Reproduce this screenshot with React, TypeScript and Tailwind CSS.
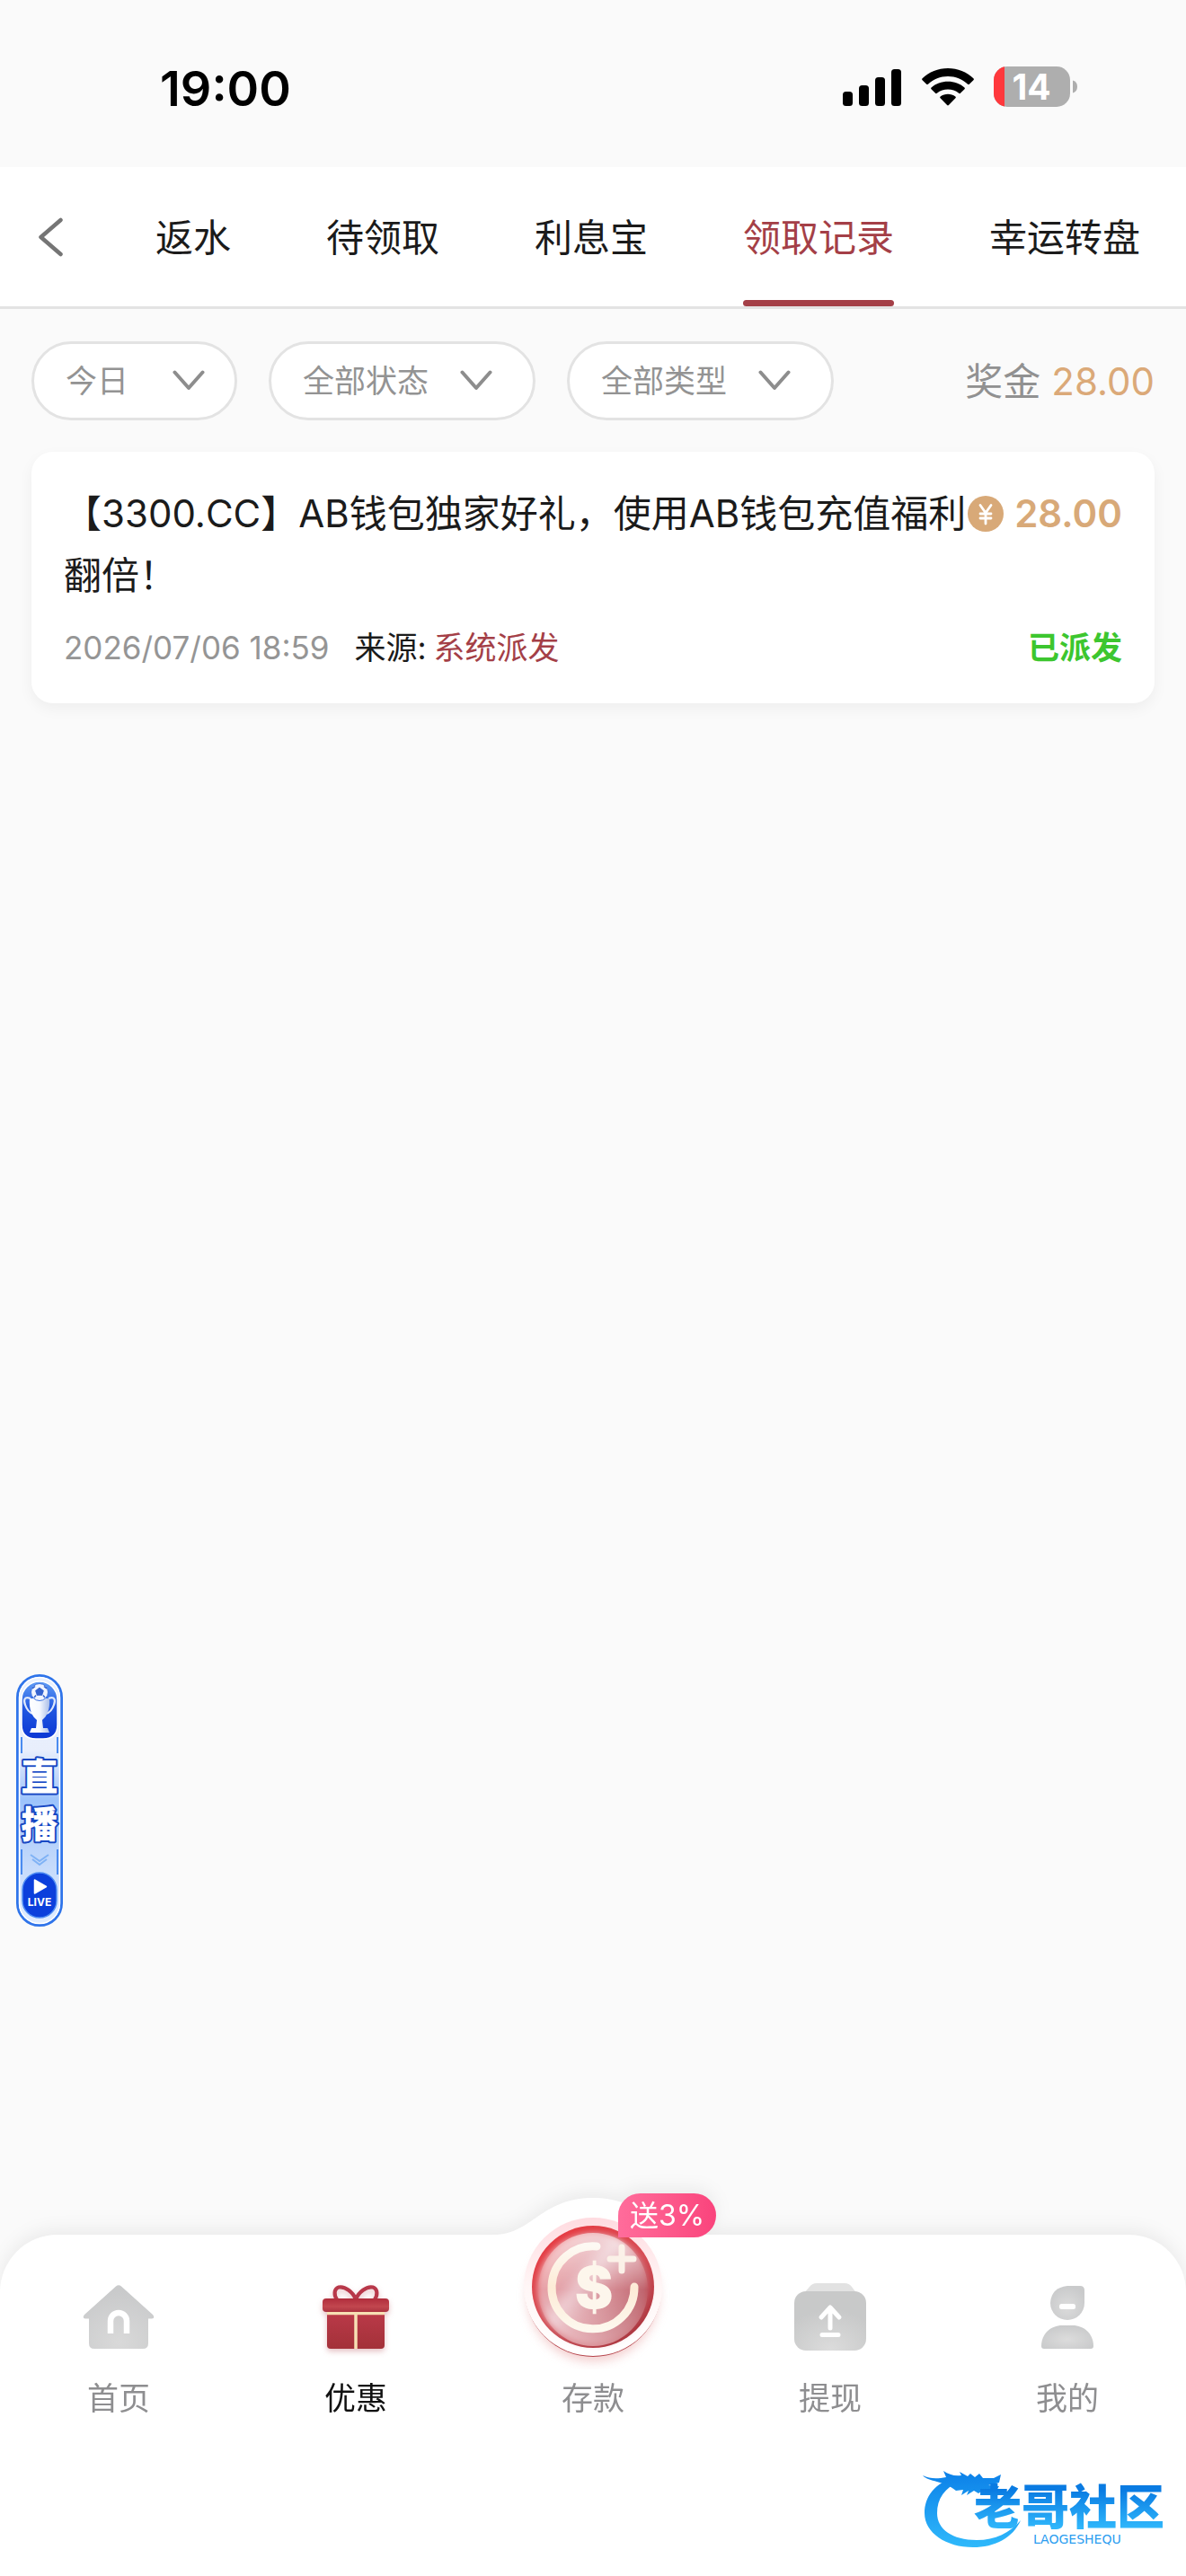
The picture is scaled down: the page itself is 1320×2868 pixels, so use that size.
import React from 'react';

const tabs = ['返水', '待领取', '利息宝', '领取记录', '幸运转盘'];

function StatusBar() {
  return (
    <div className="flex h-[186px] items-center justify-between bg-[#fafafa] pt-2 pr-[120px] pl-[178px]">
      <span className="pt-1 text-[54px] leading-none font-semibold text-black">19:00</span>
      <div className="flex items-center gap-[22px]">
        <svg className="h-[42px] w-[66px]" viewBox="0 0 66 42" aria-label="信号">
          <rect x="0" y="26" width="11" height="16" rx="3.5" />
          <rect x="18" y="19" width="11" height="23" rx="3.5" />
          <rect x="36" y="10" width="11" height="32" rx="3.5" />
          <rect x="54" y="1" width="11" height="41" rx="3.5" />
        </svg>
        <svg className="h-[42px] w-[58px]" viewBox="0 0 58 42" aria-label="无线网络">
          <path d="M0.6 13.2Q-.4 12.2.6 11.200C8 4 18 0 29 0s21 4 28.400 11.200q1 1 0 2l-4.600 4.500q-.8.8-1.700 0C45 12 37.500 9 29 9S13 12 6.900 17.700q-.9.8-1.700 0z" />
          <path d="M10.500 23.200q-.9-.9 0-1.800C15.500 17 22 14.700 29 14.700s13.500 2.300 18.500 6.700q.9.900 0 1.800l-4.600 4.600q-.8.800-1.700 0C37.500 25 33.500 23.600 29 23.600S20.500 25 16.800 27.800q-.9.800-1.700 0z" />
          <path d="M20.600 33.300q-1-.9 0-1.800C23 29.600 26 28.700 29 28.700s6 .9 8.400 2.800q1 .9 0 1.800l-7.500 7.800q-.9.900-1.800 0z" />
        </svg>
        <svg className="h-[46px] w-[94px] overflow-visible" viewBox="0 0 94 46" aria-label="电量 14%">
          <defs>
            <clipPath id="battery-shape"><rect x="0" y="0" width="85" height="45" rx="15" /></clipPath>
          </defs>
          <g clipPath="url(#battery-shape)">
            <rect width="85" height="45" fill="#aeaeae" />
            <rect width="12" height="45" fill="#ff383c" />
          </g>
          <path d="M88 15.500q5 1.500 5 7t-5 7z" fill="#aeaeae" />
          <text x="42" y="37" textAnchor="middle" fontSize="39" fontWeight="700" fill="#fff">14</text>
        </svg>
      </div>
    </div>
  );
}

function Header() {
  return (
    <header className="flex h-[158px] items-stretch border-b-[3px] border-[#e3e3e3] bg-white">
      <button type="button" aria-label="返回" className="flex min-w-0 flex-1 items-center pl-[42px]">
        <svg className="h-[44px] w-[28px]" viewBox="0 0 28 44" fill="none" stroke="#757575" strokeWidth="4.500" strokeLinecap="round" strokeLinejoin="round">
          <path d="M25.500 3 3.500 22l22 19" />
        </svg>
      </button>
      <nav className="flex gap-[106px] pr-[51px]">
        {tabs.map((tab) => {
          const active = tab === '领取记录';
          return (
            <a key={tab} href="#" aria-current={active ? 'page' : undefined} className="flex flex-col">
              <span className={active ? 'flex flex-1 items-center pt-2 text-[42px] text-[#a43f47]' : 'flex flex-1 items-center pt-2 text-[42px] text-[#1b1b1b]'}>{tab}</span>
              <span className={active ? 'h-[7px] rounded-full bg-[#a43f47]' : 'h-[7px]'} />
            </a>
          );
        })}
      </nav>
    </header>
  );
}

function Filter({ label, name, wide }: { label: string; name: string; wide?: boolean }) {
  return (
    <div className="relative">
      <select
        aria-label={name}
        className={
          wide
            ? 'h-[88px] w-[297px] appearance-none rounded-full border-[3px] border-[#e3e3e3] bg-white pl-[35px] text-[35px] text-[#939393]'
            : 'h-[88px] w-[229px] appearance-none rounded-full border-[3px] border-[#e3e3e3] bg-white pl-[35px] text-[35px] text-[#939393]'
        }
      >
        <option>{label}</option>
      </select>
      <svg
        className={wide ? 'pointer-events-none absolute top-8 right-12 h-6 w-9' : 'pointer-events-none absolute top-8 right-9 h-6 w-9'}
        viewBox="0 0 36 24"
        fill="none"
        stroke="#8d8d8d"
        strokeWidth="4"
        strokeLinecap="round"
        strokeLinejoin="round"
      >
        <path d="M2.500 2.500 18 20 33.500 2.500" />
      </svg>
    </div>
  );
}

function Record() {
  return (
    <article className="mx-[35px] mt-[35px] rounded-3xl bg-white px-9 pt-[34px] pb-7 shadow-[0_6px_16px_rgba(0,0,0,0.05)]">
      <div className="flex items-start justify-between">
        <h2 className="min-w-0 flex-1 text-[42px] leading-[69px] text-[#1b1b1b]">【3300.CC】AB钱包独家好礼，使用AB钱包充值福利翻倍！</h2>
        <div className="flex h-[69px] items-center gap-3 text-[#d8a978]">
          <svg className="h-10 w-10" viewBox="0 0 40 40" aria-hidden="true">
            <circle cx="20" cy="20" r="20" fill="#d8a978" />
            <path d="M14 10.500 20 19l6-8.500M20 19v12M14 20h12M14 25h12" fill="none" stroke="#fff" strokeWidth="2.800" strokeLinecap="round" strokeLinejoin="round" />
          </svg>
          <strong className="text-[42px] font-semibold">28.00</strong>
        </div>
      </div>
      <div className="mt-3 flex h-[68px] items-center text-[35px]">
        <time className="text-[#959595]">2026/07/06 18:59</time>
        <span className="ml-7 text-[#1b1b1b]">来源:</span>
        <span className="ml-2 text-[#a43f47]">系统派发</span>
        <strong className="ml-auto font-bold text-[#3dc62f]">已派发</strong>
      </div>
    </article>
  );
}

function LiveBadge() {
  return (
    <button type="button" aria-label="直播" className="absolute top-[1864px] left-[18px]">
      <svg className="h-[281px] w-[52px]" viewBox="0 0 52 281">
        <defs>
          <linearGradient id="live-bg" x1="0" y1="0" x2="0" y2="1">
            <stop offset="0" stopColor="#e9f1ff" />
            <stop offset=".3" stopColor="#e8eefc" />
            <stop offset=".5" stopColor="#9cc3fb" />
            <stop offset=".75" stopColor="#c3d9fb" />
            <stop offset="1" stopColor="#e3eeff" />
          </linearGradient>
          <linearGradient id="live-blue" x1="0" y1="0" x2="0" y2="1">
            <stop offset="0" stopColor="#5f9cf5" />
            <stop offset=".5" stopColor="#1f55e0" />
            <stop offset="1" stopColor="#0b36d4" />
          </linearGradient>
          <linearGradient id="live-cup" x1="0" x2="1">
            <stop offset="0" stopColor="#fff" />
            <stop offset=".5" stopColor="#f6f9ff" />
            <stop offset="1" stopColor="#a9bde8" />
          </linearGradient>
        </defs>
        <rect x="1.500" y="1.500" width="49" height="278" rx="24.500" fill="url(#live-bg)" stroke="#2f74ea" strokeWidth="3" />
        <rect x="3.500" y="3.500" width="45" height="274" rx="22.500" fill="none" stroke="#fff" strokeWidth="1.500" />
        <path d="M6 28a20 20 0 0 1 40 0v28q0 16-16 16h-8Q6 72 6 56z" fill="url(#live-blue)" stroke="#fff" strokeWidth="1.500" />
        <path d="M6 70v18M46 70v18M6 195v28M46 195v28" stroke="#4a8bf0" strokeWidth="2" />
        <g fill="none" stroke="#dfe8fb" strokeWidth="2.200">
          <path d="M16 27c-7-3-8 2-6 7 2 6 5 9 9 10M36 27c7-3 8 2 6 7-2 6-5 9-9 10" />
        </g>
        <path d="M15 27h22c1 13-3 20-8 24l1 9h5l2 5H15l2-5h5l1-9c-5-4-9-11-8-24z" fill="url(#live-cup)" />
        <circle cx="26" cy="20" r="9.500" fill="#f1f5ff" stroke="#3f74e0" strokeWidth="1" />
        <path d="M26 15.500l4 3-1.500 4.500h-5L22 18.500zM18 16l3-2.500M34 16l-3-2.500M20 26l2-2.500M32 26l-2-2.500" fill="#3563cf" stroke="#3563cf" strokeWidth="1.500" />
        <g fontSize="41" fontWeight="900" textAnchor="middle" fill="#fff" stroke="#1748c4" strokeWidth="4" strokeLinejoin="round" paintOrder="stroke">
          <text x="26" y="129">直</text>
          <text x="26" y="182">播</text>
        </g>
        <path d="m16 201 10 7 10-7M18 206l8 6 8-6" fill="none" stroke="#7fb2f5" strokeWidth="2" />
        <rect x="7" y="221" width="38" height="50" rx="19" fill="#0b3fdc" stroke="#4d8cf3" strokeWidth="1.500" />
        <path d="m20.500 229 13 7.500-13 7.500z" fill="#fff" stroke="#fff" strokeWidth="1.500" strokeLinejoin="round" />
        <text x="26" y="258" textAnchor="middle" fontSize="12" fontWeight="700" fill="#fff">LIVE</text>
      </svg>
    </button>
  );
}

function HomeIcon() {
  return (
    <svg className="h-[72px] w-20" viewBox="0 0 80 72" aria-hidden="true">
      <defs>
        <radialGradient id="home-fill" cx=".5" cy=".9" r=".8">
          <stop offset="0" stopColor="#d9d9d9" />
          <stop offset="1" stopColor="#c9cacb" />
        </radialGradient>
      </defs>
      <path d="M37 1.500q3-2.500 6 0L78 33q3 4-1 4.500h-4V65q0 6-6 6H13q-6 0-6-6V37.500H3Q-1 37 2 33z" fill="url(#home-fill)" />
      <path d="M31 54V40a9 9 0 0 1 18 0v14" fill="none" stroke="#fff" strokeWidth="6.500" />
    </svg>
  );
}

function GiftIcon() {
  return (
    <svg className="h-[72px] w-20 overflow-visible drop-shadow-[0_3px_3px_rgba(170,50,60,0.3)]" viewBox="0 0 80 72" aria-hidden="true">
      <defs>
        <linearGradient id="gift-lid" x1="0" y1="0" x2="0" y2="1">
          <stop offset="0" stopColor="#b02d3c" />
          <stop offset=".6" stopColor="#c2474f" />
          <stop offset="1" stopColor="#ab3340" />
        </linearGradient>
        <linearGradient id="gift-box" x1="0" y1="0" x2="0" y2="1">
          <stop offset="0" stopColor="#bb3a49" />
          <stop offset="1" stopColor="#a33139" />
        </linearGradient>
      </defs>
      <path d="M40 16C37 8 28 1 21 2.500c-6 2-5 10-2 13.500M40 16C43 8 52 1 59 2.500c6 2 5 10 2 13.500" fill="none" stroke="#b8384a" strokeWidth="4.200" />
      <path d="M8 30h64v37q0 4-4 4H12q-4 0-4-4z" fill="url(#gift-box)" />
      <path d="M8 31.500h64M40 31v40" stroke="#f7e0b4" strokeWidth="3.500" />
      <rect x="3" y="15" width="74" height="15" rx="4" fill="url(#gift-lid)" />
    </svg>
  );
}

function WithdrawIcon() {
  return (
    <svg className="h-[76px] w-20" viewBox="0 0 80 76" aria-hidden="true">
      <defs>
        <radialGradient id="withdraw-fill" cx=".5" cy="1" r=".7">
          <stop offset="0" stopColor="#dcdcdc" />
          <stop offset="1" stopColor="#c8c9c9" />
        </radialGradient>
      </defs>
      <path d="M10 12 17 4q3-4 8-4h31q5 0 8 4l6 8z" fill="#e2e2e2" />
      <rect x="0" y="9" width="80" height="66" rx="13" fill="url(#withdraw-fill)" />
      <path d="M40 28v22M30 38l10-11 10 11M31 57.500h18" fill="none" stroke="#fff" strokeWidth="5" strokeLinecap="round" strokeLinejoin="round" />
    </svg>
  );
}

function ProfileIcon() {
  return (
    <svg className="h-[72px] w-[60px]" viewBox="0 0 60 72" aria-hidden="true">
      <defs>
        <radialGradient id="profile-fill" cx=".5" cy=".6" r=".6">
          <stop offset="0" stopColor="#dcdcdc" />
          <stop offset="1" stopColor="#c9cacb" />
        </radialGradient>
      </defs>
      <path d="M30 1h14q5 0 5 5v14a19 19 0 0 1-38 0Q12 3 30 1z" fill="url(#profile-fill)" />
      <rect x="21" y="21" width="18" height="6" rx="2.500" fill="#fff" />
      <path d="M1 68C1 54 12 45 24 45h12c12 0 23 9 23 23q0 3-3 3H4q-3 0-3-3z" fill="url(#profile-fill)" />
    </svg>
  );
}

function DepositIcon() {
  return (
    <svg className="h-[180px] w-[180px]" viewBox="0 0 180 180" aria-hidden="true">
      <defs>
        <linearGradient id="coin-ring" x1="0" y1="0" x2="0" y2="1">
          <stop offset="0" stopColor="#ffdbe0" />
          <stop offset=".5" stopColor="#fff6f6" />
          <stop offset="1" stopColor="#fff" />
        </linearGradient>
        <linearGradient id="coin-edge" x1=".2" y1="0" x2=".8" y2="1">
          <stop offset="0" stopColor="#e8383f" />
          <stop offset=".5" stopColor="#d64c54" />
          <stop offset="1" stopColor="#a52f38" />
        </linearGradient>
        <linearGradient id="coin-face" x1=".1" y1=".1" x2=".95" y2=".8">
          <stop offset="0" stopColor="#f2a5a8" />
          <stop offset=".3" stopColor="#e2a0a7" />
          <stop offset=".42" stopColor="#ebc5cb" />
          <stop offset=".6" stopColor="#d8929a" />
          <stop offset="1" stopColor="#b04650" />
        </linearGradient>
        <linearGradient id="coin-gloss" x1="0" y1="0" x2="0" y2="1">
          <stop offset="0" stopColor="#fff" stopOpacity=".55" />
          <stop offset=".5" stopColor="#fff" stopOpacity="0" />
          <stop offset="1" stopColor="#ffe5e9" stopOpacity=".5" />
        </linearGradient>
        <linearGradient id="coin-gold" x1="0" y1="0" x2="0" y2="1">
          <stop offset="0" stopColor="#fdf9f3" />
          <stop offset=".5" stopColor="#fdebd6" />
          <stop offset="1" stopColor="#fdf8ee" />
        </linearGradient>
        <filter id="coin-shadow" x="-20%" y="-20%" width="140%" height="140%"><feGaussianBlur stdDeviation="6" /></filter>
        <filter id="coin-soft" x="-20%" y="-20%" width="140%" height="140%"><feGaussianBlur stdDeviation="3" /></filter>
      </defs>
      <circle cx="90" cy="98" r="73" fill="#e9a5a5" opacity=".55" filter="url(#coin-shadow)" />
      <circle cx="90" cy="90" r="76" fill="#b5434a" />
      <circle cx="90" cy="88" r="77" fill="url(#coin-ring)" />
      <circle cx="90" cy="88" r="68" fill="url(#coin-edge)" />
      <circle cx="90" cy="90" r="62" fill="url(#coin-face)" filter="url(#coin-soft)" />
      <ellipse cx="90" cy="91" rx="61" ry="63" fill="url(#coin-gloss)" />
      <path d="M94 43A46 46 0 1 0 136 88" fill="none" stroke="url(#coin-gold)" strokeWidth="9" strokeLinecap="round" />
      <path d="M122 44v26M109 57h26" stroke="#fbf1e8" strokeWidth="7" strokeLinecap="round" />
      <text x="91" y="112" textAnchor="middle" fontSize="64" fontWeight="900" fill="#fdf6ec">$</text>
    </svg>
  );
}

function CommunityLogo() {
  return (
    <svg className="h-[100px] w-[276px]" viewBox="0 0 276 100" role="img" aria-label="老哥社区">
      <defs>
        <linearGradient id="logo-ring" gradientUnits="userSpaceOnUse" x1="0" y1="10" x2="0" y2="96">
          <stop offset="0" stopColor="#0b7fe8" />
          <stop offset="1" stopColor="#2fb9fb" />
        </linearGradient>
        <linearGradient id="logo-text" gradientUnits="userSpaceOnUse" x1="0" y1="32" x2="0" y2="74">
          <stop offset="0" stopColor="#0a7be2" />
          <stop offset="1" stopColor="#2fb6fb" />
        </linearGradient>
      </defs>
      <path d="M38 18C14 24 3 40 3 58c0 22 24 38 54 38 24 0 44-10 53-30-12 14-28 22-49 22C34 88 17 76 17 58c0-16 8-28 26-36z" fill="url(#logo-ring)" />
      <path d="M1 16c8 4 16 4 26 2l-3-7c6 4 12 6 20 5l-2-4 9 5 3-3 5 4 5-4 4 5 12 0 8-4-2 9-12 3 12 1-4 6-13-2-6 4-5-3-8 5 2-5-8 5 2-6-8 1C24 21 8 24 1 16z" fill="url(#logo-ring)" />
      <text x="58" y="71" fontSize="53" fontWeight="900" fill="url(#logo-text)">老哥社区</text>
      <text x="124" y="92" fontSize="14" fill="#2b9df0" fontFamily="DejaVu Sans, sans-serif">LAOGESHEQU</text>
    </svg>
  );
}

const navItems = [
  { label: '首页', icon: <HomeIcon /> },
  { label: '优惠', icon: <GiftIcon />, active: true },
  { label: '存款', icon: <DepositIcon />, badge: '送3%' },
  { label: '提现', icon: <WithdrawIcon /> },
  { label: '我的', icon: <ProfileIcon /> },
];

function BottomNav() {
  return (
    <footer className="relative mt-auto h-[380px] drop-shadow-[0_-6px_9px_rgba(0,0,0,0.06)]">
      <div className="absolute inset-0 rounded-t-[64px] bg-white" />
      <svg className="absolute -top-[41px] left-1/2 h-[42px] w-[220px] -translate-x-1/2" viewBox="0 0 220 42" aria-hidden="true">
        <path d="M0 42v-1C42 41 52 0 110 0s68 41 110 41v1z" fill="#fff" />
      </svg>
      <nav className="relative grid grid-cols-5">
        {navItems.map((item) => (
          <a key={item.label} href="#" className="relative flex h-[206px] flex-col items-center justify-between">
            {item.badge ? (
              <>
                <span className="-mt-[30px]">{item.icon}</span>
                <span className="absolute -top-[46px] left-1/2 ml-7 flex h-[49px] w-[109px] items-center justify-center rounded-t-full rounded-br-full bg-linear-to-r from-[#ff6c9b] to-[#fa437c] text-[32px] text-white">{item.badge}</span>
              </>
            ) : (
              <span className="flex h-[158px] items-center pt-[26px]">{item.icon}</span>
            )}
            <span className={item.active ? 'text-[35px] leading-[48px] text-[#111]' : 'text-[35px] leading-[48px] text-[#8e8e90]'}>{item.label}</span>
          </a>
        ))}
      </nav>
      <a href="#" className="absolute right-[18px] bottom-[28px]">
        <CommunityLogo />
      </a>
    </footer>
  );
}

export default function App() {
  return (
    <div className="relative flex min-h-screen flex-col bg-[#fafafa] font-[Inter,'Noto_Sans_CJK_SC',sans-serif]">
      <StatusBar />
      <Header />
      <main>
        <div className="mt-9 flex items-center gap-[35px] px-[35px]">
          <Filter name="日期" label="今日" />
          <Filter name="状态" label="全部状态" wide />
          <Filter name="类型" label="全部类型" wide />
          <p className="ml-auto flex items-center gap-3 text-[42px] text-[#919191]">
            奖金 <span className="text-[#dba978]">28.00</span>
          </p>
        </div>
        <Record />
      </main>
      <LiveBadge />
      <BottomNav />
    </div>
  );
}
